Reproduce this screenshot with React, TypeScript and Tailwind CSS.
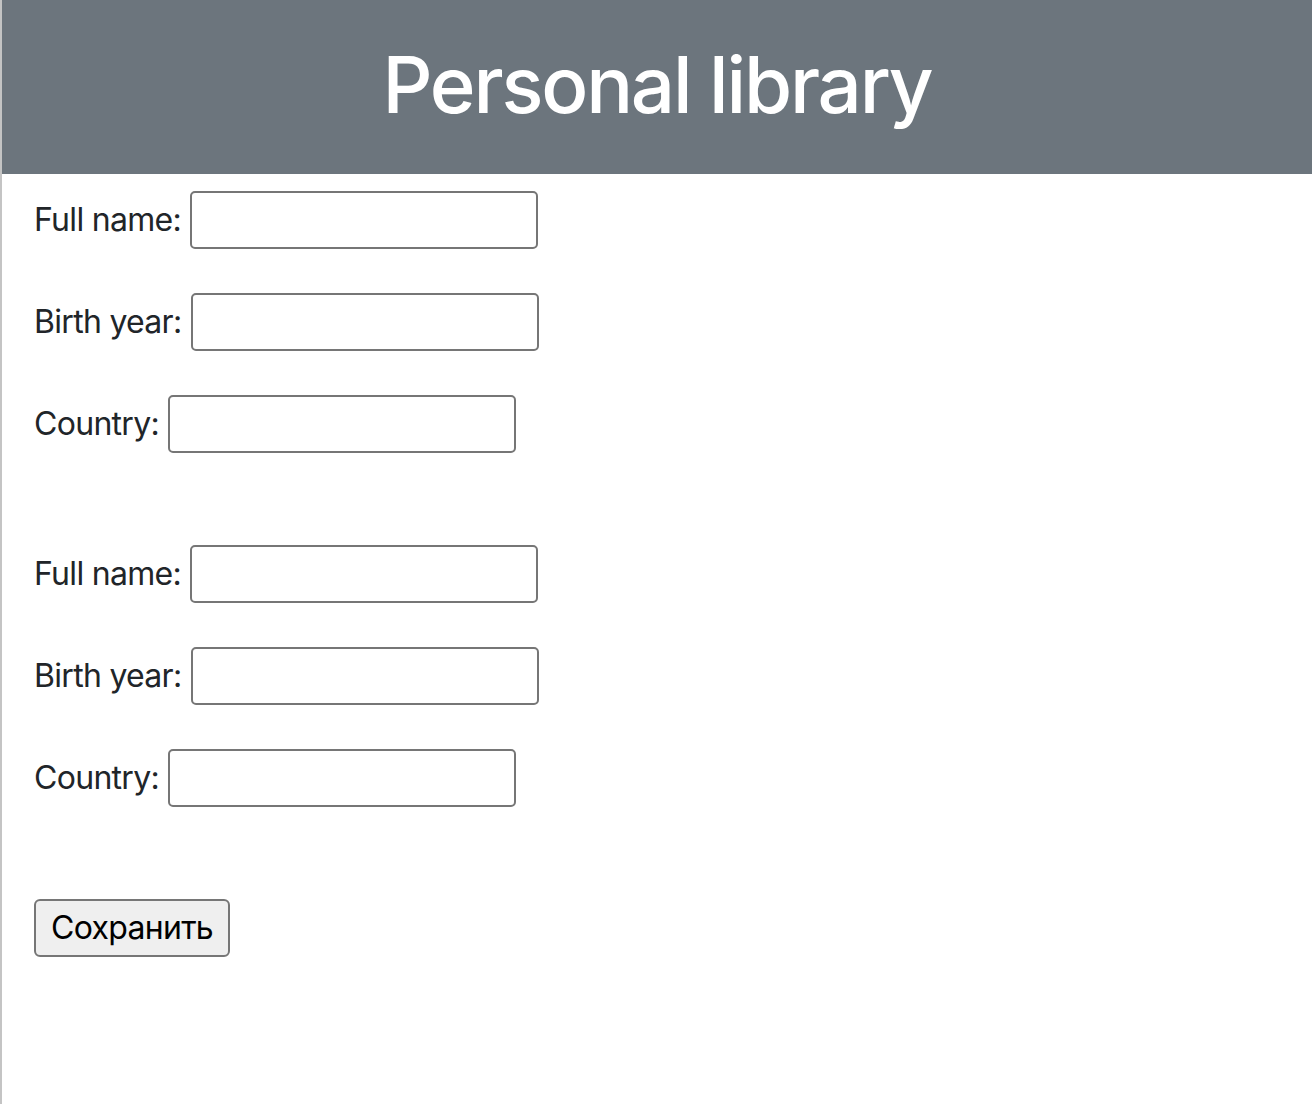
import React from "react";

const font = { fontFamily: 'Inter, "Noto Sans", "Liberation Sans", sans-serif' };

function Row({ label }: { label: string }) {
  return (
    <div className="flex items-center h-[58px]">
      <label className="text-[32px] leading-none text-[#212529] mr-[9px] tracking-[-0.7px]">{label}</label>
      <input
        type="text"
        className="w-[348px] h-[58px] border-2 border-[#767676] rounded-[5px] bg-white outline-none px-2 text-[26px]"
      />
    </div>
  );
}

function Group() {
  return (
    <div className="flex flex-col gap-[44px]">
      <Row label="Full name:" />
      <Row label="Birth year:" />
      <Row label="Country:" />
    </div>
  );
}

export default function App() {
  return (
    <div className="min-h-[1104px] bg-white border-l-2 border-[#c4c4c4]" style={font}>
      <header className="h-[174px] bg-[#6c757d] flex items-center justify-center">
        <h1 className="text-white text-[78px] font-medium leading-none tracking-[-2.2px] pb-[4px]">
          Personal library
        </h1>
      </header>
      <main className="pl-[32px] pt-[17px] flex flex-col gap-[92px]">
        <Group />
        <Group />
        <div>
          <button
            type="button"
            className="h-[58px] px-[15px] bg-[#efefef] border-2 border-[#767676] rounded-[6px] text-[32px] text-black leading-none tracking-[-0.7px]"
          >
            Сохранить
          </button>
        </div>
      </main>
    </div>
  );
}
